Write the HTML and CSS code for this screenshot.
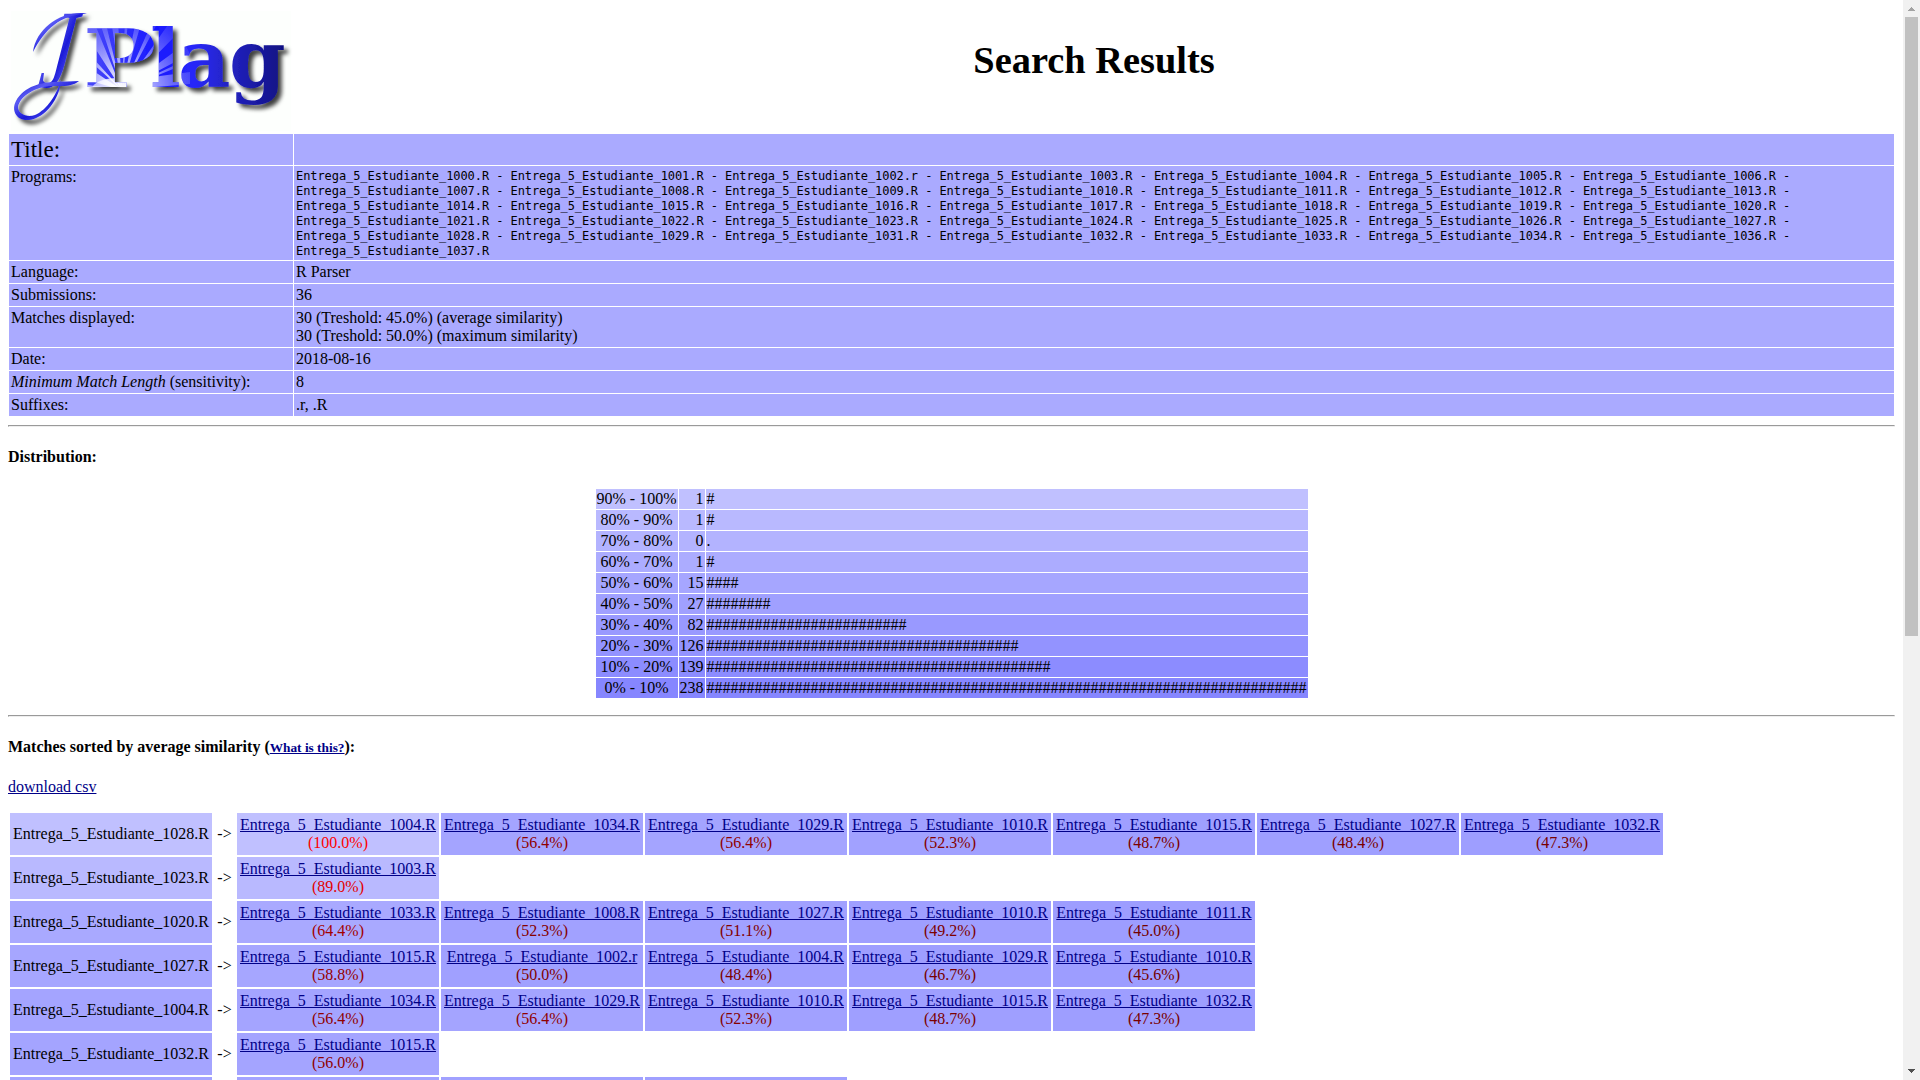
FILE: index.html
```
<!DOCTYPE html>
<html lang="en">
<head>
<meta charset="utf-8">
<title>JPlag - Search Results</title>
<link rel="stylesheet" href="styles.css">
</head>
<body>
<main class="page">
<table class="info">
<colgroup><col class="c-label"><col></colgroup>
<tr class="head">
<td><svg class="logo" width="280" height="120" viewBox="11 11 280 120" role="img" aria-label="JPlag">
<defs>
<linearGradient id="jg" x1="0" y1="0" x2="1" y2="1"><stop offset="0" stop-color="#1414c8"/><stop offset=".3" stop-color="#5a5af4"/><stop offset=".55" stop-color="#1c1cd8"/><stop offset=".75" stop-color="#4c4cf0"/><stop offset="1" stop-color="#0a0ab0"/></linearGradient>
<linearGradient id="pg" gradientUnits="userSpaceOnUse" x1="85" y1="0" x2="285" y2="0"><stop offset="0" stop-color="#3c3cf8"/><stop offset=".35" stop-color="#1818ff"/><stop offset=".55" stop-color="#2828f8"/><stop offset=".7" stop-color="#2424c8"/><stop offset="1" stop-color="#101080"/></linearGradient>
<linearGradient id="pg1" x1="0" y1="0" x2="1" y2="0"><stop offset="0" stop-color="#4c4cf8"/><stop offset="1" stop-color="#1818ff"/></linearGradient>
<radialGradient id="glow" gradientUnits="userSpaceOnUse" cx="122" cy="90" r="85"><stop offset="0" stop-color="#fff"/><stop offset=".25" stop-color="#fff" stop-opacity=".75"/><stop offset="1" stop-color="#9090ff" stop-opacity=".1"/></radialGradient>
<clipPath id="word"><text class="plag" transform="translate(83 87) scale(1.2 1)">P</text><text class="plag" x="150 178 229" y="87">lag</text></clipPath>
<filter id="sh" x="-20%" y="-20%" width="140%" height="150%"><feDropShadow dx="4" dy="4" stdDeviation="2.2" flood-color="#000" flood-opacity=".75"/></filter>
</defs>
<rect x="11" y="11" width="280" height="120" fill="#fdfffd"/>
<g filter="url(#sh)">
<text class="jay" transform="translate(37 87) skewX(-8) scale(.66 1)">J</text>
<path d="M33 52C36 28 62 10 87 13.500C60 15 45 29 33 52Z" fill="url(#jg)"/>
<path d="M79 81C72 87 61 86 53 86C36 86 20 96 18 107C18 114 27 118 35 115C47 110 57 94 61 80C60 98 46 118 29 120C16 121 11 110 16 101C24 86 42 82 56 82Z" fill="url(#jg)"/>
<text class="plag" transform="translate(83 87) scale(1.2 1)" fill="url(#pg1)">P</text>
<text class="plag" x="150 178 229" y="87" fill="url(#pg)">lag</text>
</g>
<g clip-path="url(#word)" fill="url(#glow)">
<path d="M122 90L82 28L94 22Z M122 90L99 20L105 20Z M122 90L111 20L118 20Z M122 90L125 20L128 20Z M122 90L136 20L142 20Z M122 90L153 20L158 22Z M122 90L170 22L181 30Z M122 90L185 44L190 54Z M122 90L80 44L80 52Z M122 90L80 62L80 78Z M122 90L160 76L190 72L190 84Z M122 90L82 84L82 92Z M122 90L190 58L190 62Z"/>
<ellipse cx="118" cy="89" rx="26" ry="11"/>
</g>
</svg></td>
<td><h1>Search Results</h1></td>
</tr>
<tr class="title"><td>Title:</td><td></td></tr>
<tr><td>Programs:</td><td class="mono">Entrega_5_Estudiante_1000.R - Entrega_5_Estudiante_1001.R - Entrega_5_Estudiante_1002.r - Entrega_5_Estudiante_1003.R - Entrega_5_Estudiante_1004.R - Entrega_5_Estudiante_1005.R - Entrega_5_Estudiante_1006.R -<br>Entrega_5_Estudiante_1007.R - Entrega_5_Estudiante_1008.R - Entrega_5_Estudiante_1009.R - Entrega_5_Estudiante_1010.R - Entrega_5_Estudiante_1011.R - Entrega_5_Estudiante_1012.R - Entrega_5_Estudiante_1013.R -<br>Entrega_5_Estudiante_1014.R - Entrega_5_Estudiante_1015.R - Entrega_5_Estudiante_1016.R - Entrega_5_Estudiante_1017.R - Entrega_5_Estudiante_1018.R - Entrega_5_Estudiante_1019.R - Entrega_5_Estudiante_1020.R -<br>Entrega_5_Estudiante_1021.R - Entrega_5_Estudiante_1022.R - Entrega_5_Estudiante_1023.R - Entrega_5_Estudiante_1024.R - Entrega_5_Estudiante_1025.R - Entrega_5_Estudiante_1026.R - Entrega_5_Estudiante_1027.R -<br>Entrega_5_Estudiante_1028.R - Entrega_5_Estudiante_1029.R - Entrega_5_Estudiante_1031.R - Entrega_5_Estudiante_1032.R - Entrega_5_Estudiante_1033.R - Entrega_5_Estudiante_1034.R - Entrega_5_Estudiante_1036.R -<br>Entrega_5_Estudiante_1037.R</td></tr>
<tr><td>Language:</td><td>R Parser</td></tr>
<tr><td>Submissions:</td><td>36</td></tr>
<tr><td>Matches displayed:</td><td>30 (Treshold: 45.0%) (average similarity)<br>30 (Treshold: 50.0%) (maximum similarity)</td></tr>
<tr><td>Date:</td><td>2018-08-16</td></tr>
<tr><td><em>Minimum Match Length</em> (sensitivity):</td><td>8</td></tr>
<tr><td>Suffixes:</td><td>.r, .R</td></tr>
</table>
<hr>
<h4>Distribution:</h4>
<table class="dist">
<colgroup><col class="c-range"><col class="c-count"><col class="c-bar"></colgroup>
<tr style="background:rgb(192,192,255)"><td>90% - 100%</td><td>1</td><td>#</td></tr>
<tr style="background:rgb(185,185,255)"><td>80% - 90%</td><td>1</td><td>#</td></tr>
<tr style="background:rgb(179,179,255)"><td>70% - 80%</td><td>0</td><td>.</td></tr>
<tr style="background:rgb(172,172,255)"><td>60% - 70%</td><td>1</td><td>#</td></tr>
<tr style="background:rgb(166,166,255)"><td>50% - 60%</td><td>15</td><td>####</td></tr>
<tr style="background:rgb(160,160,255)"><td>40% - 50%</td><td>27</td><td>########</td></tr>
<tr style="background:rgb(153,153,255)"><td>30% - 40%</td><td>82</td><td>#########################</td></tr>
<tr style="background:rgb(147,147,255)"><td>20% - 30%</td><td>126</td><td>#######################################</td></tr>
<tr style="background:rgb(140,140,255)"><td>10% - 20%</td><td>139</td><td>###########################################</td></tr>
<tr style="background:rgb(134,134,255)"><td>0% - 10%</td><td>238</td><td>###########################################################################</td></tr>
</table>
<hr>
<h4>Matches sorted by average similarity (<a class="help" href="#">What is this?</a>):</h4>
<p class="csv"><a href="#">download csv</a></p>
<table class="matches">
<colgroup><col class="c-sub"><col class="c-arrow"><col class="c-sub" span="7"></colgroup>
<tr><td style="--p:100">Entrega_5_Estudiante_1028.R</td><td class="arrow">-&gt;</td><td style="--p:100"><a href="#">Entrega_5_Estudiante_1004.R</a><span>(100.0%)</span></td><td style="--p:56.4"><a href="#">Entrega_5_Estudiante_1034.R</a><span>(56.4%)</span></td><td style="--p:56.4"><a href="#">Entrega_5_Estudiante_1029.R</a><span>(56.4%)</span></td><td style="--p:52.3"><a href="#">Entrega_5_Estudiante_1010.R</a><span>(52.3%)</span></td><td style="--p:48.7"><a href="#">Entrega_5_Estudiante_1015.R</a><span>(48.7%)</span></td><td style="--p:48.4"><a href="#">Entrega_5_Estudiante_1027.R</a><span>(48.4%)</span></td><td style="--p:47.3"><a href="#">Entrega_5_Estudiante_1032.R</a><span>(47.3%)</span></td></tr>
<tr><td style="--p:89">Entrega_5_Estudiante_1023.R</td><td class="arrow">-&gt;</td><td style="--p:89"><a href="#">Entrega_5_Estudiante_1003.R</a><span>(89.0%)</span></td></tr>
<tr><td style="--p:64.4">Entrega_5_Estudiante_1020.R</td><td class="arrow">-&gt;</td><td style="--p:64.4"><a href="#">Entrega_5_Estudiante_1033.R</a><span>(64.4%)</span></td><td style="--p:52.3"><a href="#">Entrega_5_Estudiante_1008.R</a><span>(52.3%)</span></td><td style="--p:51.1"><a href="#">Entrega_5_Estudiante_1027.R</a><span>(51.1%)</span></td><td style="--p:49.2"><a href="#">Entrega_5_Estudiante_1010.R</a><span>(49.2%)</span></td><td style="--p:45"><a href="#">Entrega_5_Estudiante_1011.R</a><span>(45.0%)</span></td></tr>
<tr><td style="--p:58.8">Entrega_5_Estudiante_1027.R</td><td class="arrow">-&gt;</td><td style="--p:58.8"><a href="#">Entrega_5_Estudiante_1015.R</a><span>(58.8%)</span></td><td style="--p:50"><a href="#">Entrega_5_Estudiante_1002.r</a><span>(50.0%)</span></td><td style="--p:48.4"><a href="#">Entrega_5_Estudiante_1004.R</a><span>(48.4%)</span></td><td style="--p:46.7"><a href="#">Entrega_5_Estudiante_1029.R</a><span>(46.7%)</span></td><td style="--p:45.6"><a href="#">Entrega_5_Estudiante_1010.R</a><span>(45.6%)</span></td></tr>
<tr><td style="--p:56.4">Entrega_5_Estudiante_1004.R</td><td class="arrow">-&gt;</td><td style="--p:56.4"><a href="#">Entrega_5_Estudiante_1034.R</a><span>(56.4%)</span></td><td style="--p:56.4"><a href="#">Entrega_5_Estudiante_1029.R</a><span>(56.4%)</span></td><td style="--p:52.3"><a href="#">Entrega_5_Estudiante_1010.R</a><span>(52.3%)</span></td><td style="--p:48.7"><a href="#">Entrega_5_Estudiante_1015.R</a><span>(48.7%)</span></td><td style="--p:47.3"><a href="#">Entrega_5_Estudiante_1032.R</a><span>(47.3%)</span></td></tr>
<tr><td style="--p:56">Entrega_5_Estudiante_1032.R</td><td class="arrow">-&gt;</td><td style="--p:56"><a href="#">Entrega_5_Estudiante_1015.R</a><span>(56.0%)</span></td></tr>
<tr class="next"><td style="--p:55"></td><td class="arrow"></td><td style="--p:55"></td><td style="--p:52"></td><td style="--p:50"></td></tr>
</table>
</main>
<div class="scrollbar">
<svg width="7" height="4" viewBox="0 0 7 4" shape-rendering="crispEdges"><path d="M3 0h1v1h1v1h1v1h1v1H0V3h1V2h1V1h1z" fill="#a3a3a3"/></svg>
<div class="thumb"></div>
<svg width="7" height="4" viewBox="0 0 7 4" shape-rendering="crispEdges"><path d="M0 0h7v1H6v1H5v1H4v1H3V3H2V2H1V1H0z" fill="#505050"/></svg>
</div>
</body>
</html>
```
FILE: styles.css
```
body {
  margin: 0;
  height: 1080px;
  overflow: hidden;
  display: flex;
  background: #fff;
  color: #000;
  font: 16px/18px "Liberation Serif", "Times New Roman", serif;
}
.page {
  flex: 1;
  min-width: 0;
  height: 1080px;
  overflow: hidden;
  box-sizing: border-box;
  padding: 8px 8px 0;
}
a { color: #000088; }
table { table-layout: fixed; }
hr { margin: 8px 0; }
h4 { margin: 21px 0 22px; font-size: 16px; }

.info { width: 100%; border-spacing: 1px; }
.info td { background: #aaaaff; padding: 2px; vertical-align: top; }
.info .c-label { width: 284px; }
.info .head td { background: none; }
.logo { display: block; overflow: visible; }
h1 {
  margin: 27px 0 0;
  font-size: 38.4px;
  line-height: 44px;
  text-align: center;
}
.info .title td { height: 27px; font-size: 23.04px; line-height: 27px; }
.info .mono {
  padding: 3px 2px 1px;
  font: 12px/15px "DejaVu Sans Mono", monospace;
  letter-spacing: -0.075px;
  white-space: nowrap;
}
.plag { font: bold 81px "DejaVu Serif", serif; }
.jay { font: italic 112px "Liberation Serif", serif; fill: url(#jg); }

.dist { width: 714px; margin: 0 auto 16px; border-spacing: 1px; }
.dist td { padding: 1px; white-space: nowrap; text-align: center; }
.dist td + td { text-align: right; }
.dist td + td + td { text-align: left; }
.c-range { width: 82px; }
.c-count { width: 26px; }
.c-bar { width: 602px; }

.help { font-size: 13.33px; }
.csv { margin: -1px 0 15px; }
.matches { width: 1656px; border-spacing: 2px; }
.matches td {
  height: 36px;
  padding: 3px 0;
  text-align: center;
  white-space: nowrap;
  background: rgb(calc(128 + var(--p) * .64), calc(128 + var(--p) * .64), 255);
}
.matches .arrow { background: none; }
.matches span { display: block; color: rgb(calc(var(--p) * 2.55), 0, 0); }
.c-sub { width: 202px; }
.c-arrow { width: 21px; }

.scrollbar {
  width: 17px;
  height: 1080px;
  box-sizing: border-box;
  padding: 7px 0;
  display: flex;
  flex-direction: column;
  align-items: center;
  background: #f1f1f1;
}
.thumb {
  width: 13px;
  height: 619px;
  margin: 6px 0 auto;
  background: #c1c1c1;
}
```
